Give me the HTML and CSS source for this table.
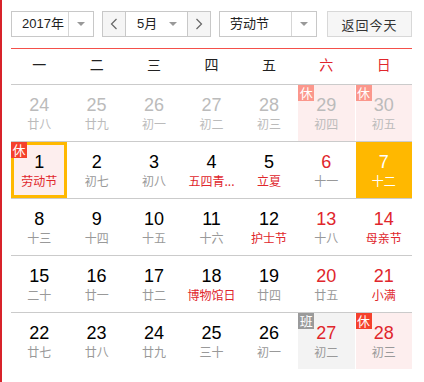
FILE: index.html
```html
<!DOCTYPE html>
<html lang="zh-CN">
<head>
<meta charset="utf-8">
<title>万年历</title>
<link rel="stylesheet" href="styles.css">
</head>
<body>
<div class="page">
  <div class="toolbar">
    <div class="select year">
      <span class="val">2017年</span>
      <span class="arrbox"><i class="arr"></i></span>
    </div>
    <div class="month-group">
      <span class="nav prev"><svg width="8" height="12" viewBox="0 0 8 12"><polyline points="6.5,1 1.5,6 6.5,11" fill="none" stroke="#666" stroke-width="1.2"/></svg></span>
      <span class="month">
        <span class="val">5月</span>
        <span class="arrbox"><i class="arr"></i></span>
      </span>
      <span class="nav next"><svg width="8" height="12" viewBox="0 0 8 12"><polyline points="1.5,1 6.5,6 1.5,11" fill="none" stroke="#666" stroke-width="1.2"/></svg></span>
    </div>
    <div class="select holiday">
      <span class="val">劳动节</span>
      <span class="arrbox"><i class="arr"></i></span>
    </div>
    <button class="today-btn">返回今天</button>
  </div>

  <div class="week">
    <span>一</span><span>二</span><span>三</span><span>四</span><span>五</span><span class="wk">六</span><span class="wk">日</span>
  </div>

  <div class="row">
    <div class="cell other"><b>24</b><em>廿八</em></div>
    <div class="cell other"><b>25</b><em>廿九</em></div>
    <div class="cell other"><b>26</b><em>初一</em></div>
    <div class="cell other"><b>27</b><em>初二</em></div>
    <div class="cell other"><b>28</b><em>初三</em></div>
    <div class="cell other rest"><i class="badge">休</i><b>29</b><em>初四</em></div>
    <div class="cell other rest"><i class="badge">休</i><b>30</b><em>初五</em></div>
  </div>
  <div class="row">
    <div class="cell rest selected"><i class="badge">休</i><b>1</b><em class="fest">劳动节</em></div>
    <div class="cell"><b>2</b><em>初七</em></div>
    <div class="cell"><b>3</b><em>初八</em></div>
    <div class="cell"><b>4</b><em class="fest">五四青...</em></div>
    <div class="cell"><b>5</b><em class="fest">立夏</em></div>
    <div class="cell we"><b>6</b><em>十一</em></div>
    <div class="cell today"><b>7</b><em>十二</em></div>
  </div>
  <div class="row">
    <div class="cell"><b>8</b><em>十三</em></div>
    <div class="cell"><b>9</b><em>十四</em></div>
    <div class="cell"><b>10</b><em>十五</em></div>
    <div class="cell"><b>11</b><em>十六</em></div>
    <div class="cell"><b>12</b><em class="fest">护士节</em></div>
    <div class="cell we"><b>13</b><em>十八</em></div>
    <div class="cell we"><b>14</b><em class="fest">母亲节</em></div>
  </div>
  <div class="row">
    <div class="cell"><b>15</b><em>二十</em></div>
    <div class="cell"><b>16</b><em>廿一</em></div>
    <div class="cell"><b>17</b><em>廿二</em></div>
    <div class="cell"><b>18</b><em class="fest">博物馆日</em></div>
    <div class="cell"><b>19</b><em>廿四</em></div>
    <div class="cell we"><b>20</b><em>廿五</em></div>
    <div class="cell we"><b>21</b><em class="fest">小满</em></div>
  </div>
  <div class="row last">
    <div class="cell"><b>22</b><em>廿七</em></div>
    <div class="cell"><b>23</b><em>廿八</em></div>
    <div class="cell"><b>24</b><em>廿九</em></div>
    <div class="cell"><b>25</b><em>三十</em></div>
    <div class="cell"><b>26</b><em>初一</em></div>
    <div class="cell we work"><i class="badge">班</i><b>27</b><em>初二</em></div>
    <div class="cell we rest"><i class="badge">休</i><b>28</b><em>初三</em></div>
  </div>
</div>
</body>
</html>
```

FILE: styles.css
```css
html, body {
  margin: 0;
  padding: 0;
  background: #fff;
}
body {
  font-family: "Liberation Sans", "Noto Sans CJK SC", sans-serif;
  color: #333;
}
.page {
  box-sizing: border-box;
  height: 382px;
  border-left: 2px solid #d8232a;
  padding: 11px 12px 0 9px;
}

/* toolbar */
.toolbar {
  display: flex;
  height: 26px;
  font-size: 13px;
  padding-bottom: 11px;
  border-bottom: 1px solid #f4504a;
}
.select,
.month-group {
  box-sizing: border-box;
  height: 26px;
  display: flex;
  border: 1px solid #c8c8c8;
  background: #fff;
}
.val {
  flex: 1;
  line-height: 24px;
  padding-left: 10px;
  color: #222;
  font-family: "Liberation Sans", "Noto Sans CJK SC", sans-serif;
}
.arrbox {
  width: 24px;
  display: flex;
  align-items: center;
  justify-content: center;
  border-left: 1px solid #d6d6d6;
}
.arr {
  width: 0;
  height: 0;
  border-left: 4px solid transparent;
  border-right: 4px solid transparent;
  border-top: 4px solid #999;
}
.year { width: 83px; }
.month-group {
  width: 109px;
  margin-left: 8px;
}
.nav {
  width: 22px;
  background: #f5f5f5;
  display: flex;
  align-items: center;
  justify-content: center;
}
.nav.prev { border-right: 1px solid #c8c8c8; }
.nav.next { border-left: 1px solid #c8c8c8; }
.month {
  flex: 1;
  display: flex;
}
.month .val { padding-left: 11px; }
.month .arrbox { border-left: 0; width: 28px; }
.holiday {
  width: 98px;
  margin-left: 8px;
}
.holiday .val { padding-left: 10px; }
.today-btn {
  box-sizing: border-box;
  width: 85px;
  height: 26px;
  margin-left: 10px;
  border: 1px solid #d8d8d8;
  background: #f6f6f6;
  color: #333;
  font-size: 13px;
  font-family: "Noto Sans CJK SC", sans-serif;
  padding: 0;
  letter-spacing: 1px;
}

/* week header */
.week {
  display: grid;
  grid-template-columns: repeat(7, 1fr);
  column-gap: 1px;
  height: 35px;
  border-bottom: 1px solid #cbcbcb;
  font-family: "Noto Sans CJK SC", sans-serif;
  font-size: 14px;
  line-height: 31px;
  text-align: center;
  color: #222;
}
.week .wk { color: #e0262c; }

/* grid rows */
.row {
  display: grid;
  grid-template-columns: repeat(7, 1fr);
  column-gap: 1px;
  height: 56px;
  border-bottom: 1px solid #cbcbcb;
}
.row.last { border-bottom: 0; }
.cell {
  position: relative;
  box-sizing: border-box;
  min-width: 0;
  padding-top: 9px;
  text-align: center;
}
.cell b {
  display: block;
  font-weight: normal;
  font-size: 18px;
  line-height: 22px;
  color: #000;
  font-family: "Liberation Sans", sans-serif;
}
.cell em {
  display: block;
  font-style: normal;
  font-size: 12px;
  line-height: 16px;
  color: #999;
  font-family: "Noto Sans CJK SC", sans-serif;
  white-space: nowrap;
}
.cell em.fest { color: #e0262c; }
.cell.we b { color: #e0262c; }
.cell.other b,
.cell.other em { color: #bbb; }

.cell.rest { background: #fdeeee; }
.cell.work { background: #f3f3f3; }

.badge {
  position: absolute;
  left: 0;
  top: 0;
  width: 16px;
  height: 16px;
  font-style: normal;
  font-size: 13px;
  line-height: 16px;
  text-align: center;
  color: #fff;
  background: #f5412c;
  font-family: "Noto Sans CJK SC", sans-serif;
}
.work .badge { background: #9a9a9a; }
.other .badge { background: #fb978c; }

.cell.selected {
  border: 3px solid #ffb800;
  padding-top: 6px;
}
.cell.selected .badge { left: -3px; top: -3px; }

.cell.today { background: #ffb800; }
.cell.today b,
.cell.today em { color: #fff; }
```
